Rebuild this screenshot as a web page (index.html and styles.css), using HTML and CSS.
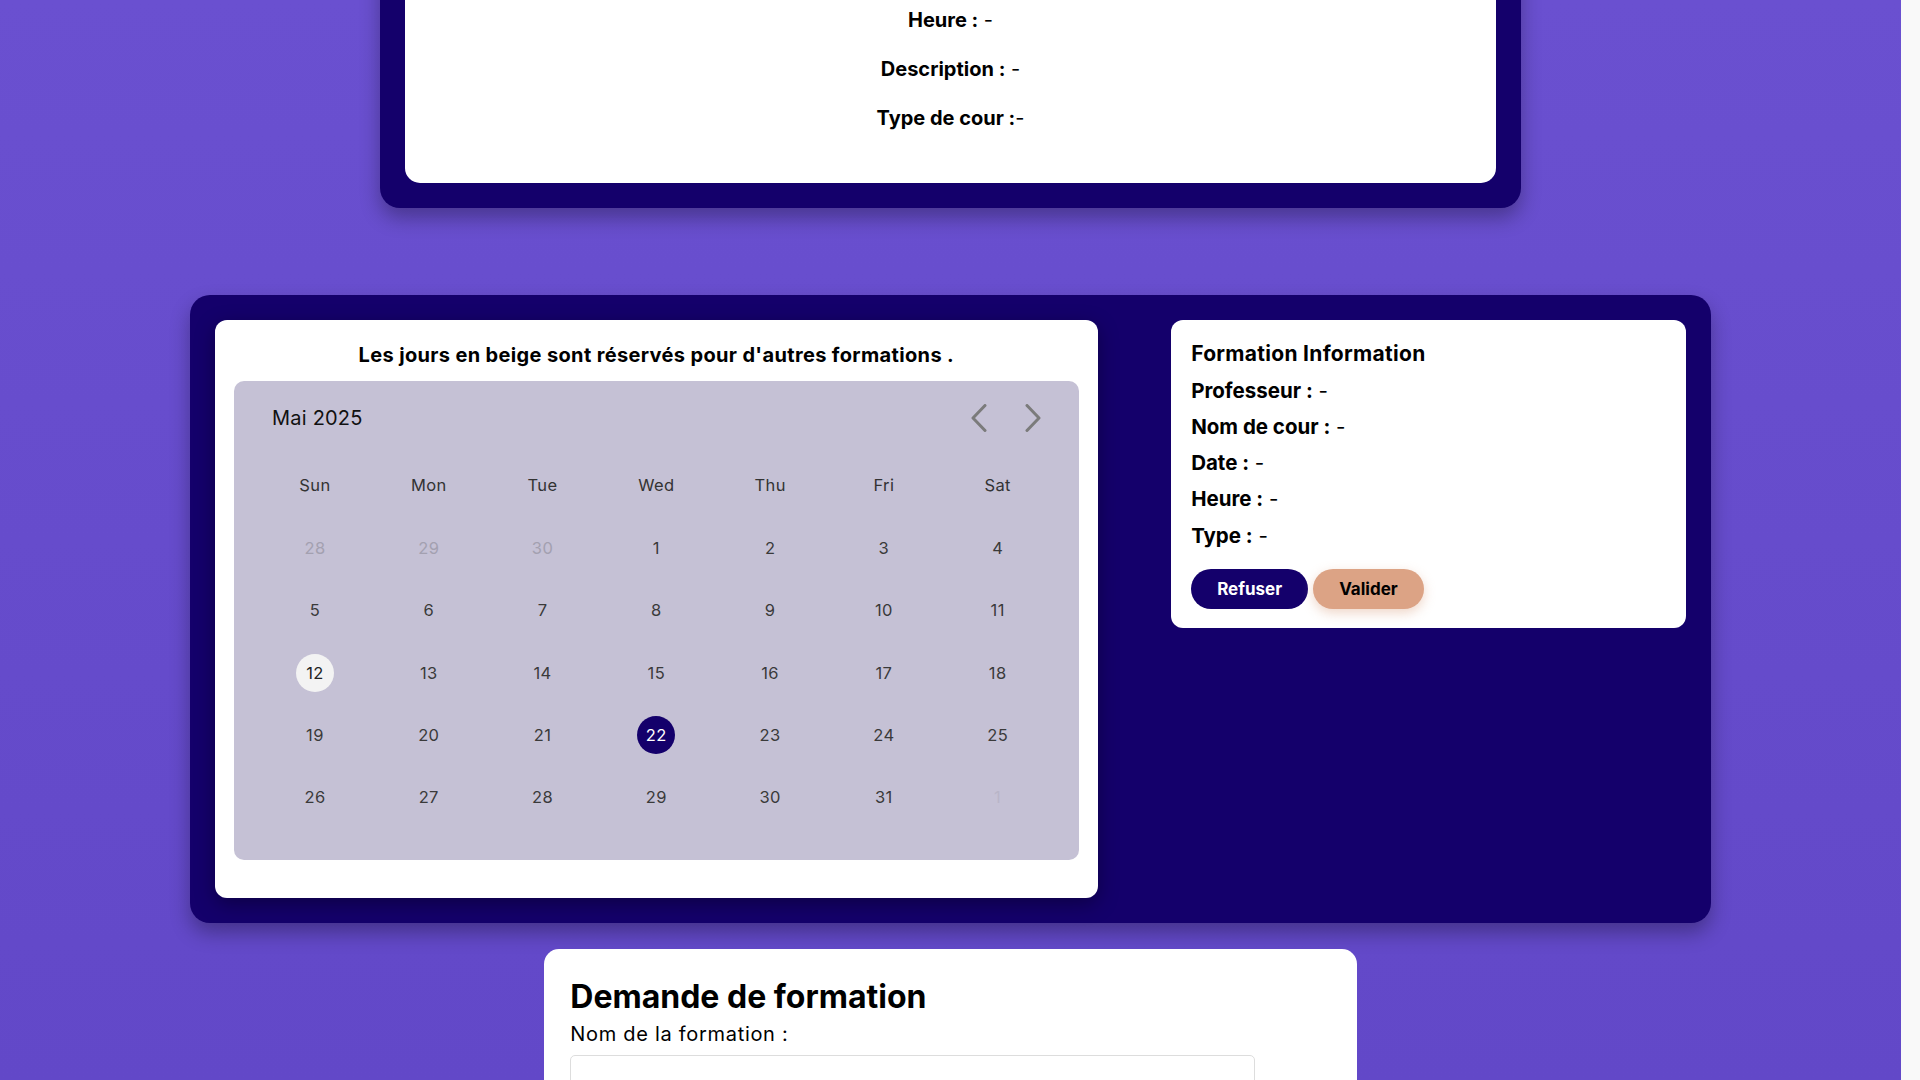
FILE: index.html
```html
<!DOCTYPE html>
<html lang="fr">
<head>
<meta charset="utf-8">
<title>Planning des formations</title>
<link rel="stylesheet" href="styles.css">
<script src="script.js" defer></script>
</head>
<body>
<main class="page">
  <section class="course-panel">
    <div class="course-card">
      <h2 class="course-title">Détails du cours</h2>
      <p class="course-line"><strong>Nom de cour :</strong> -</p>
      <p class="course-line"><strong>Professeur :</strong> -</p>
      <p class="course-line"><strong>Date :</strong> -</p>
      <p class="course-line"><strong>Heure :</strong> -</p>
      <p class="course-line"><strong>Description :</strong> -</p>
      <p class="course-line"><strong>Type de cour :</strong>-</p>
    </div>
  </section>

  <section class="planning">
    <div class="calendar-card">
      <h3 class="calendar-note">Les jours en beige sont réservés pour d'autres formations .</h3>
      <div class="calendar">
        <div class="cal-head">
          <span class="cal-month">Mai 2025</span>
          <div class="cal-nav">
            <button class="cal-btn" type="button" aria-label="Mois précédent">
              <svg width="16" height="28" viewBox="0 0 16 28"><polyline points="14,1.5 2,14 14,26.5" fill="none" stroke="#7b7b7b" stroke-width="3" stroke-linecap="round" stroke-linejoin="round"/></svg>
            </button>
            <button class="cal-btn" type="button" aria-label="Mois suivant">
              <svg width="16" height="28" viewBox="0 0 16 28"><polyline points="2,1.5 14,14 2,26.5" fill="none" stroke="#7b7b7b" stroke-width="3" stroke-linecap="round" stroke-linejoin="round"/></svg>
            </button>
          </div>
        </div>
        <div class="cal-grid">
          <span class="dow">Sun</span><span class="dow">Mon</span><span class="dow">Tue</span><span class="dow">Wed</span><span class="dow">Thu</span><span class="dow">Fri</span><span class="dow">Sat</span>
          <span class="day muted">28</span><span class="day muted">29</span><span class="day muted">30</span><span class="day">1</span><span class="day">2</span><span class="day">3</span><span class="day">4</span>
          <span class="day">5</span><span class="day">6</span><span class="day">7</span><span class="day">8</span><span class="day">9</span><span class="day">10</span><span class="day">11</span>
          <span class="day today">12</span><span class="day">13</span><span class="day">14</span><span class="day">15</span><span class="day">16</span><span class="day">17</span><span class="day">18</span>
          <span class="day">19</span><span class="day">20</span><span class="day">21</span><span class="day selected">22</span><span class="day">23</span><span class="day">24</span><span class="day">25</span>
          <span class="day">26</span><span class="day">27</span><span class="day">28</span><span class="day">29</span><span class="day">30</span><span class="day">31</span><span class="day faint">1</span>
        </div>
      </div>
    </div>

    <div class="info-card">
      <h3 class="info-title">Formation Information</h3>
      <p class="info-line"><strong>Professeur :</strong> -</p>
      <p class="info-line"><strong>Nom de cour :</strong> -</p>
      <p class="info-line"><strong>Date :</strong> -</p>
      <p class="info-line"><strong>Heure :</strong> -</p>
      <p class="info-line"><strong>Type :</strong> -</p>
      <div class="info-actions">
        <button class="btn btn-refuse" type="button">Refuser</button>
        <button class="btn btn-validate" type="button">Valider</button>
      </div>
    </div>
  </section>

  <section class="request-card">
    <h2 class="request-title">Demande de formation</h2>
    <form class="request-form">
      <label class="field-label" for="nom">Nom de la formation :</label>
      <input class="field-input" id="nom" type="text">
      <label class="field-label" for="desc">Description :</label>
      <input class="field-input" id="desc" type="text">
      <label class="field-label" for="date">Date :</label>
      <input class="field-input" id="date" type="text">
      <label class="field-label" for="heure">Heure :</label>
      <input class="field-input" id="heure" type="text">
      <label class="field-label" for="type">Type de cour :</label>
      <input class="field-input" id="type" type="text">
      <button class="btn btn-refuse submit" type="button">Envoyer</button>
    </form>
  </section>
</main>
</body>
</html>
```
FILE: styles.css
```css
html {
  height: 100%;
  overflow: hidden;
  background: #f9f9f9;
}

body {
  margin: 0 19px 0 0;
  height: 100vh;
  overflow-y: scroll;
  background: linear-gradient(180deg, #6a50d0 0%, #6248c8 100%);
  font-family: Inter, "Liberation Sans", sans-serif;
  color: #000;
}

body::-webkit-scrollbar {
  width: 0;
}

.page {
  padding: 420px 0 700px;
}

/* ---------- course panel ---------- */
.course-panel {
  width: 60%;
  margin: 0 auto;
  box-sizing: border-box;
  padding: 25px;
  background: #14006b;
  border-radius: 20px;
  box-shadow: 0 10px 20px rgba(0, 0, 0, 0.3);
}

.course-card {
  background: #fff;
  border-radius: 15px;
  padding: 30px 20px 39px;
  text-align: center;
}

.course-title {
  margin: 0;
  font-size: 28px;
  line-height: 60px;
  font-weight: 700;
}

.course-line {
  margin: 0;
  font-size: 20px;
  line-height: 49.3px;
}

.course-line strong {
  font-weight: 700;
}

/* ---------- planning ---------- */
.planning {
  width: 80%;
  margin: 87.5px auto 0;
  box-sizing: border-box;
  padding: 25px;
  background: #14006b;
  border-radius: 20px;
  display: flex;
  justify-content: space-between;
  align-items: flex-start;
  box-shadow: 0 10px 20px rgba(0, 0, 0, 0.3);
}

.calendar-card {
  width: 60%;
  box-sizing: border-box;
  background: #fff;
  border-radius: 12px;
  padding: 18px 19px 38px;
  box-shadow: 0 6px 20px rgba(0, 0, 0, 0.35);
}

.calendar-note {
  margin: 0 0 9px;
  font-size: 20px;
  letter-spacing: 0.35px;
  line-height: 34px;
  font-weight: 700;
  text-align: center;
}

.calendar {
  background: #c5c1d5;
  border-radius: 10px;
  padding: 23px 24px 31.6px;
}

.cal-head {
  display: flex;
  justify-content: space-between;
  align-items: center;
  height: 28px;
  padding: 0 14px;
  margin-bottom: 22px;
}

.cal-month {
  font-size: 20px;
  letter-spacing: 0.2px;
  color: #111;
}

.cal-nav {
  display: flex;
  gap: 38px;
}

.cal-btn {
  border: 0;
  padding: 0;
  background: none;
  display: flex;
  cursor: pointer;
}

.cal-grid {
  display: grid;
  grid-template-columns: repeat(7, 1fr);
  grid-auto-rows: 62.4px;
  align-items: center;
  justify-items: center;
}

.dow {
  font-size: 16.5px;
  letter-spacing: 0.4px;
  color: #333;
}

.day {
  width: 38px;
  height: 38px;
  border-radius: 50%;
  display: flex;
  align-items: center;
  justify-content: center;
  font-size: 16.5px;
  letter-spacing: 0.4px;
  color: #3a3a3a;
}

.day.muted {
  color: #a3a0b0;
}

.day.faint {
  color: #b9b5c8;
}

.day.today {
  background: #f3f3f3;
  color: #222;
}

.day.selected {
  background: #14006b;
  color: #fff;
}

/* ---------- info card ---------- */
.info-card {
  width: 35%;
  box-sizing: border-box;
  background: #fff;
  border-radius: 12px;
  padding: 20px 20px 19px;
}

.info-title {
  margin: 0 0 8.25px;
  font-size: 21px;
  letter-spacing: 0.3px;
  line-height: 28px;
  font-weight: 700;
}

.info-line {
  margin: 0 0 8.25px;
  font-size: 20.5px;
  line-height: 28px;
}

.info-line strong {
  font-weight: 700;
}

.info-actions {
  display: flex;
  gap: 5px;
  margin-top: 19.75px;
}

.btn {
  height: 40px;
  border: 0;
  border-radius: 20px;
  padding: 0 26px;
  font-family: inherit;
  font-size: 17px;
  font-weight: 700;
  cursor: pointer;
}

.btn-refuse {
  background: #14006b;
  color: #fff;
}

.btn-validate {
  background: #dca385;
  color: #000;
  box-shadow: 0 4px 12px rgba(220, 163, 133, 0.45);
}

/* ---------- request card ---------- */
.request-card {
  width: 40%;
  margin: 26px auto 0;
  padding: 25px 26px;
  background: #fff;
  border-radius: 15px;
}

.request-title {
  margin: 0;
  font-size: 32px;
  line-height: 45px;
  font-weight: 700;
}

.request-form {
  display: flex;
  flex-direction: column;
  align-items: flex-start;
}

.field-label {
  margin-top: 0;
  font-size: 20px;
  letter-spacing: 0.7px;
  line-height: 30px;
}

.field-input {
  width: 90%;
  box-sizing: border-box;
  height: 45px;
  margin: 6px 0 16px;
  border: 1px solid #ddd;
  border-radius: 5px;
  font-family: inherit;
  font-size: 16px;
}

.submit {
  margin-top: 10px;
}
```
FILE: script.js
```js
history.scrollRestoration = 'manual';
(function () {
  var scroller = document.body;
  var panel = document.querySelector('.planning');
  var y = panel.getBoundingClientRect().top + scroller.scrollTop - 295;
  scroller.scrollTop = y;
})();
```
